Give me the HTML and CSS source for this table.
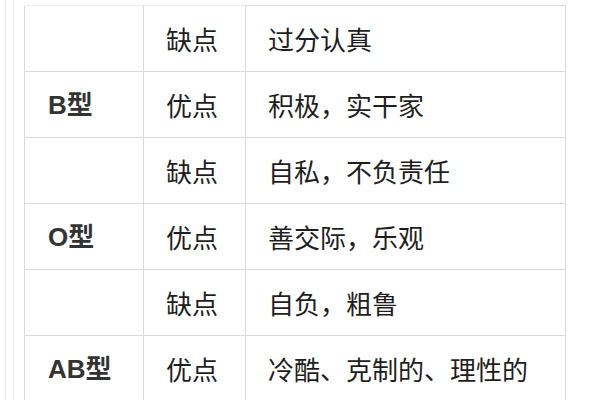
FILE: index.html
```html
<!DOCTYPE html>
<html lang="zh">
<head>
<meta charset="utf-8">
<link rel="stylesheet" href="styles.css">
</head>
<body>
<div class="page">
  <div class="frame">
    <div class="inner">
      <table class="traits">
        <colgroup>
          <col class="c-type">
          <col class="c-kind">
          <col class="c-desc">
        </colgroup>
        <tbody>
          <tr class="first">
            <td class="type"></td>
            <td class="kind">缺点</td>
            <td class="desc">过分认真</td>
          </tr>
          <tr>
            <td class="type">B型</td>
            <td class="kind">优点</td>
            <td class="desc">积极，实干家</td>
          </tr>
          <tr>
            <td class="type"></td>
            <td class="kind">缺点</td>
            <td class="desc">自私，不负责任</td>
          </tr>
          <tr>
            <td class="type no-top">O型</td>
            <td class="kind">优点</td>
            <td class="desc">善交际，乐观</td>
          </tr>
          <tr>
            <td class="type"></td>
            <td class="kind">缺点</td>
            <td class="desc">自负，粗鲁</td>
          </tr>
          <tr>
            <td class="type">AB型</td>
            <td class="kind">优点</td>
            <td class="desc">冷酷、克制的、理性的</td>
          </tr>
        </tbody>
      </table>
    </div>
  </div>
</div>
</body>
</html>
```

FILE: styles.css
```css
html, body {
  margin: 0;
  padding: 0;
  background: #ffffff;
}

.page {
  width: 600px;
  height: 400px;
  overflow: hidden;
  padding-left: 5px;
  box-sizing: border-box;
}

.frame {
  height: 100%;
  border-left: 1px solid #f0f0f0;
  padding-left: 7px;
}

.inner {
  height: 100%;
  border-left: 1px solid #f2f2f2;
  padding-left: 10px;
  padding-top: 5px;
  box-sizing: border-box;
}

.traits {
  border-collapse: collapse;
  table-layout: fixed;
  width: 542px;
  font-family: "Noto Sans CJK SC", "Noto Sans", sans-serif;
  font-size: 26px;
  color: #1e1e1e;
}

.c-type { width: 119px; }
.c-kind { width: 102px; }

.traits td {
  height: 65px;
  padding: 0 0 0 22px;
  border: 1px solid #dadada;
  vertical-align: middle;
  white-space: nowrap;
  line-height: 1;
}

.traits tr.first td {
  border-top-color: #f0f0f0;
}

.traits tr.first td.desc {
  border-top-color: #dcdcdc;
}

.traits td.type {
  padding-left: 23px;
  font-family: "Liberation Sans", "Noto Sans CJK SC", sans-serif;
  font-weight: bold;
  color: #333333;
}

.traits td.no-top {
  border-top-color: #f6f6f6;
}

.traits td.desc {
  padding-left: 22px;
}
```
